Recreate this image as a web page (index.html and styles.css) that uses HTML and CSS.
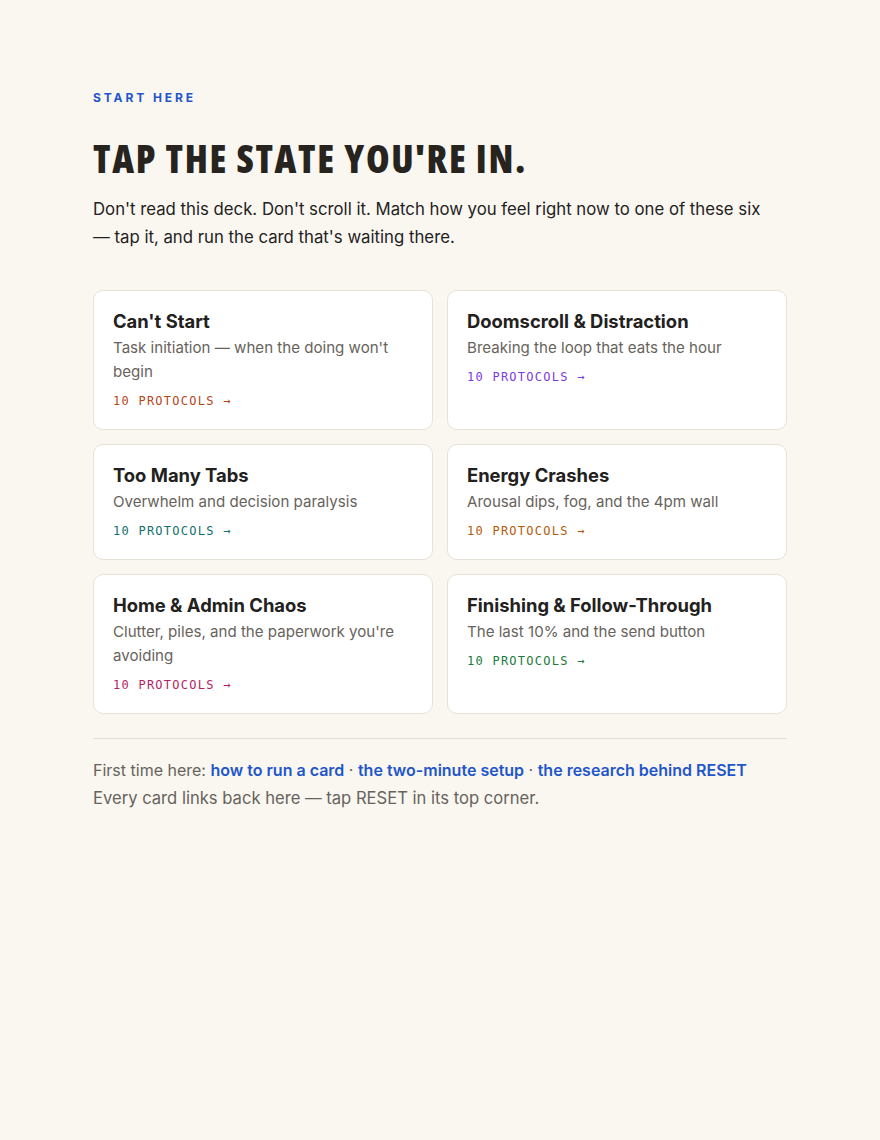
FILE: index.html
```html
<!DOCTYPE html>
<html>
    <head>
        <title>RESET — Start Here</title>
        <meta charset="UTF-8">
        <link rel="stylesheet" href="styles.css">
    </head>
    <body>
        <div class="page">
            <div class="eyebrow">START HERE</div>
            <h1 class="title">TAP THE STATE YOU'RE IN.</h1>
            <p class="intro">Don't read this deck. Don't scroll it. Match how you feel right now to one of these six — tap it, and run the card that's waiting there.</p>

            <div class="states">
                <a class="state" href="#">
                    <div class="state-name">Can't Start</div>
                    <div class="state-desc">Task initiation — when the doing won't begin</div>
                    <div class="state-count rust">10 PROTOCOLS →</div>
                </a>
                <a class="state" href="#">
                    <div class="state-name">Doomscroll &amp; Distraction</div>
                    <div class="state-desc">Breaking the loop that eats the hour</div>
                    <div class="state-count violet">10 PROTOCOLS →</div>
                </a>
                <a class="state" href="#">
                    <div class="state-name">Too Many Tabs</div>
                    <div class="state-desc">Overwhelm and decision paralysis</div>
                    <div class="state-count teal">10 PROTOCOLS →</div>
                </a>
                <a class="state" href="#">
                    <div class="state-name">Energy Crashes</div>
                    <div class="state-desc">Arousal dips, fog, and the 4pm wall</div>
                    <div class="state-count amber">10 PROTOCOLS →</div>
                </a>
                <a class="state" href="#">
                    <div class="state-name">Home &amp; Admin Chaos</div>
                    <div class="state-desc">Clutter, piles, and the paperwork you're avoiding</div>
                    <div class="state-count berry">10 PROTOCOLS →</div>
                </a>
                <a class="state" href="#">
                    <div class="state-name">Finishing &amp; Follow-Through</div>
                    <div class="state-desc">The last 10% and the send button</div>
                    <div class="state-count green">10 PROTOCOLS →</div>
                </a>
            </div>

            <div class="footnote">
                <p class="first-time">First time here: <a href="#">how to run a card</a> · <a href="#">the two-minute setup</a> · <a href="#">the research behind RESET</a></p>
                <p class="back-link">Every card links back here — tap RESET in its top corner.</p>
            </div>
        </div>
    </body>
</html>
```

FILE: styles.css
```css
body
{
	margin:0;
	padding:0;
	background-color:#faf7f1;
	color:#23211d;
	font-family:Inter, "Noto Sans", sans-serif;
}

.page
{
	max-width:694px;
	margin:0 auto;
	padding:90px 0 60px 0;
}

.eyebrow
{
	font-size:12px;
	font-weight:700;
	letter-spacing:2.9px;
	color:#1f56c9;
	line-height:16px;
}

.title
{
	margin:30px 0 0 0;
	font-family:"Open Sans", sans-serif;
	font-stretch:75%;
	font-weight:800;
	font-size:38px;
	line-height:44px;
	letter-spacing:1.7px;
	color:#27241f;
}

.intro
{
	max-width:680px;
	margin:15px 0 0 0;
	font-size:16.75px;
	line-height:28px;
	color:#23211d;
}

.states
{
	display:grid;
	grid-template-columns:1fr 1fr;
	gap:14px;
	margin-top:39px;
}

.state
{
	display:block;
	background-color:#fff;
	border:1px solid #e7e2d9;
	border-radius:10px;
	padding:19px;
	text-decoration:none;
	color:inherit;
}

.state-name
{
	font-size:18.4px;
	font-weight:700;
	line-height:22px;
	color:#23211d;
}

.state-desc
{
	margin-top:4px;
	font-size:15.1px;
	line-height:24px;
	color:#67635c;
}

.state-count
{
	margin-top:8px;
	font-family:"DejaVu Sans Mono", "Liberation Mono", monospace;
	font-size:12px;
	line-height:18px;
	letter-spacing:1.25px;
}

.rust { color:#b4461c; }
.violet { color:#7d3ae0; }
.teal { color:#11706a; }
.amber { color:#b35a0c; }
.berry { color:#b51d63; }
.green { color:#1b7a3c; }

.footnote
{
	margin-top:24px;
	border-top:1px solid #e3ddd3;
	padding-top:17px;
	line-height:28px;
	color:#67635c;
}

.footnote p
{
	margin:0;
}

.first-time
{
	font-size:16px;
}

.back-link
{
	font-size:16.6px;
}

.footnote a
{
	color:#1f56c9;
	font-weight:600;
	text-decoration:none;
}
```
